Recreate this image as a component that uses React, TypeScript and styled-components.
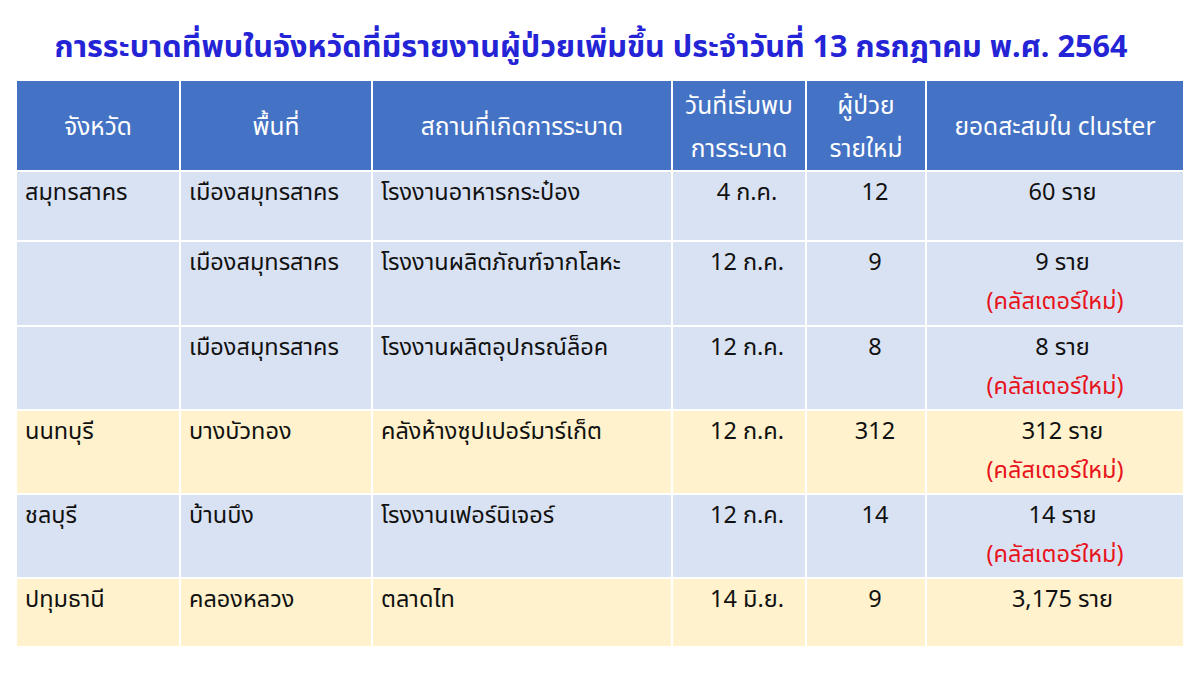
import React from "react";
import styled, { createGlobalStyle } from "styled-components";

const Global = createGlobalStyle`
  html, body { margin: 0; padding: 0; background: #ffffff; }
  body { font-family: "Noto Sans", "Noto Sans Thai", Tahoma, sans-serif; }
`;

const Page = styled.div`
  width: 1200px;
  height: 675px;
  box-sizing: border-box;
  padding: 27px 17px 0 17px;
  display: flex;
  flex-direction: column;
  gap: 17px;
  background: #ffffff;
`;

const Title = styled.h1`
  margin: 0;
  height: 37px;
  padding-right: 18px;
  text-align: center;
  font-size: 30.6px;
  line-height: 37px;
  font-weight: 700;
  color: #2424d6;
  white-space: nowrap;
`;

const Grid = styled.div`
  display: grid;
  grid-template-columns: 162px 190px 298px 132px 118px 256px;
  grid-template-rows: 89px 68px 83px 82px 82px 82px 67px;
  gap: 2px;
`;

type Tone = "head" | "blue" | "yellow";

const bg: Record<Tone, string> = {
  head: "#4472c4",
  blue: "#d9e2f3",
  yellow: "#fff2cc",
};

const HeadCell = styled.div`
  background: ${bg.head};
  color: #ffffff;
  display: flex;
  flex-direction: column;
  align-items: center;
  justify-content: center;
  text-align: center;
  font-size: 24.5px;
  line-height: 43px;
  white-space: nowrap;
`;

const Cell = styled.div<{ $tone: Tone; $center?: boolean; $shift?: number }>`
  background: ${(p) => bg[p.$tone]};
  color: #111111;
  display: flex;
  flex-direction: column;
  align-items: ${(p) => (p.$center ? "center" : "flex-start")};
  padding-left: ${(p) => (p.$center ? p.$shift ?? 0 : 8)}px;
  box-sizing: border-box;
  font-size: 23.5px;
  line-height: 39px;
  white-space: nowrap;
`;

const Total = styled.span`
  padding-left: 15px;
`;

const NewTag = styled.span`
  color: #e8141c;
`;

type Row = {
  tone: Tone;
  prov: string;
  area: string;
  place: string;
  date: string;
  cases: string;
  total: string;
  isNew: boolean;
};

const rows: Row[] = [
  { tone: "blue", prov: "สมุทรสาคร", area: "เมืองสมุทรสาคร", place: "โรงงานอาหารกระป๋อง", date: "4 ก.ค.", cases: "12", total: "60 ราย", isNew: false },
  { tone: "blue", prov: "", area: "เมืองสมุทรสาคร", place: "โรงงานผลิตภัณฑ์จากโลหะ", date: "12 ก.ค.", cases: "9", total: "9 ราย", isNew: true },
  { tone: "blue", prov: "", area: "เมืองสมุทรสาคร", place: "โรงงานผลิตอุปกรณ์ล็อค", date: "12 ก.ค.", cases: "8", total: "8 ราย", isNew: true },
  { tone: "yellow", prov: "นนทบุรี", area: "บางบัวทอง", place: "คลังห้างซุปเปอร์มาร์เก็ต", date: "12 ก.ค.", cases: "312", total: "312 ราย", isNew: true },
  { tone: "blue", prov: "ชลบุรี", area: "บ้านบึง", place: "โรงงานเฟอร์นิเจอร์", date: "12 ก.ค.", cases: "14", total: "14 ราย", isNew: true },
  { tone: "yellow", prov: "ปทุมธานี", area: "คลองหลวง", place: "ตลาดไท", date: "14 มิ.ย.", cases: "9", total: "3,175 ราย", isNew: false },
];

export default function App() {
  return (
    <>
      <Global />
      <Page>
        <Title>การระบาดที่พบในจังหวัดที่มีรายงานผู้ป่วยเพิ่มขึ้น ประจำวันที่ 13 กรกฎาคม พ.ศ. 2564</Title>
        <Grid>
          <HeadCell>จังหวัด</HeadCell>
          <HeadCell>พื้นที่</HeadCell>
          <HeadCell>สถานที่เกิดการระบาด</HeadCell>
          <HeadCell>
            <span>วันที่เริ่มพบ</span>
            <span>การระบาด</span>
          </HeadCell>
          <HeadCell>
            <span>ผู้ป่วย</span>
            <span>รายใหม่</span>
          </HeadCell>
          <HeadCell>ยอดสะสมใน cluster</HeadCell>
          {rows.map((r, i) => (
            <React.Fragment key={i}>
              <Cell $tone={r.tone}>{r.prov}</Cell>
              <Cell $tone={r.tone}>{r.area}</Cell>
              <Cell $tone={r.tone}>{r.place}</Cell>
              <Cell $tone={r.tone} $center $shift={16}>{r.date}</Cell>
              <Cell $tone={r.tone} $center $shift={18}>{r.cases}</Cell>
              <Cell $tone={r.tone} $center>
                <Total>{r.total}</Total>
                {r.isNew && <NewTag>(คลัสเตอร์ใหม่)</NewTag>}
              </Cell>
            </React.Fragment>
          ))}
        </Grid>
      </Page>
    </>
  );
}
